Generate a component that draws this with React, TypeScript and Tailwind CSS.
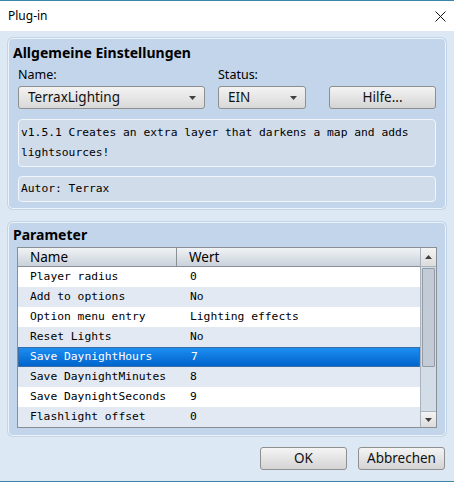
import React from "react";

const ui = { fontFamily: '"Noto Sans", "Liberation Sans", sans-serif' };
const mono = { fontFamily: '"DejaVu Sans Mono", "Liberation Mono", monospace' };

const params = [
  { name: "Player radius", value: "0" },
  { name: "Add to options", value: "No" },
  { name: "Option menu entry", value: "Lighting effects" },
  { name: "Reset Lights", value: "No" },
  { name: "Save DaynightHours", value: "7" },
  { name: "Save DaynightMinutes", value: "8" },
  { name: "Save DaynightSeconds", value: "9" },
  { name: "Flashlight offset", value: "0" },
];

const selected = 4;

function Arrow({ up = false }: { up?: boolean }) {
  return (
    <svg width="7" height="4" viewBox="0 0 7 4" className={up ? "rotate-180" : ""}>
      <path d="M0 0 H7 L3.5 4 Z" fill="#404040" />
    </svg>
  );
}

function Dropdown({ label, width }: { label: string; width: string }) {
  return (
    <div
      className={`${width} h-[23px] flex items-center justify-between pl-[9px] pr-[8px] rounded-[3px] border border-[#8f8f8f] bg-gradient-to-b from-[#f3f3f3] to-[#d9d9d9] text-[13.5px] text-[#111]`}
    >
      <span>{label}</span>
      <Arrow />
    </div>
  );
}

function Button({ label, width }: { label: string; width: string }) {
  return (
    <div
      className={`${width} h-[23px] flex items-center justify-center rounded-[3px] border border-[#8f8f8f] bg-gradient-to-b from-[#f4f4f4] to-[#d4d4d4] text-[13.5px] text-[#111]`}
    >
      {label}
    </div>
  );
}

export default function App() {
  return (
    <div className="w-[454px] h-[482px] flex flex-col border-t border-b border-[#3b87aa] bg-[#dde8f5]" style={ui}>
      {/* title bar */}
      <div className="h-[30px] shrink-0 bg-white flex items-center justify-between pl-[8px] pr-[8px]">
        <span className="text-[12px] text-black">Plug-in</span>
        <svg width="11" height="11" viewBox="0 0 11 11">
          <path d="M0.5 0.5 L10.5 10.5 M10.5 0.5 L0.5 10.5" stroke="#111" strokeWidth="1" />
        </svg>
      </div>

      {/* Allgemeine Einstellungen */}
      <div className="mx-[8px] mt-[7px] h-[171px] rounded-[5px] border border-[#edf3fa] bg-[#c3d5ea] px-[9px] pt-[6px] shadow-[0_0_0_1px_rgba(150,175,205,0.35)]">
        <div className="-ml-[5px] text-[14px] leading-[16px] font-bold text-black">Allgemeine Einstellungen</div>
        <div className="mt-[6px] flex text-[12.5px] leading-[16px] text-black">
          <span className="w-[200px]">Name:</span>
          <span>Status:</span>
        </div>
        <div className="mt-[3px] flex items-center">
          <Dropdown label="TerraxLighting" width="w-[187px]" />
          <div className="ml-[13px]">
            <Dropdown label="EIN" width="w-[88px]" />
          </div>
          <div className="ml-auto">
            <Button label="Hilfe..." width="w-[107px]" />
          </div>
        </div>
        <div
          className="mt-[10px] h-[48px] rounded-[4px] border border-[#f2f6fb] bg-[#d0dcea] pl-[2px] pt-[3px] text-[11.3px] leading-[20px] text-black"
          style={mono}
        >
          v1.5.1 Creates an extra layer that darkens a map and adds
          <br />
          lightsources!
        </div>
        <div
          className="mt-[9px] h-[26px] rounded-[4px] border border-[#f2f6fb] bg-[#d0dcea] pl-[2px] pt-[2px] text-[11.3px] leading-[20px] text-black"
          style={mono}
        >
          Autor: Terrax
        </div>
      </div>

      {/* Parameter */}
      <div className="mx-[8px] mt-[13px] h-[214px] rounded-[5px] border border-[#edf3fa] bg-[#c3d5ea] px-[8px] pt-[4px] shadow-[0_0_0_1px_rgba(150,175,205,0.35)]">
        <div className="ml-[-4px] text-[14px] leading-[16px] font-bold text-black">Parameter</div>
        <div className="mt-[4px] h-[181px] flex border border-[#8a8f96] bg-white">
          <div className="flex-1 flex flex-col">
            <div className="h-[19px] flex border-b border-[#8a8f96] bg-gradient-to-b from-[#f1f3f5] to-[#c9d1da] text-[13.5px] leading-[18px] text-black">
              <div className="w-[159px] pl-[12px] border-r border-[#8a8f96]">Name</div>
              <div className="pl-[12px]">Wert</div>
            </div>
            {params.map((p, i) => {
              const sel = i === selected;
              const bg = sel
                ? "bg-gradient-to-b from-[#1d8df2] to-[#0064cc] border border-[#3a6fa6] text-white"
                : i % 2 === 1
                  ? "bg-[#e3e9f2] text-black"
                  : "bg-white text-black";
              return (
                <div key={p.name} className={`h-[20px] flex items-center text-[11.3px] ${bg}`} style={mono}>
                  <div className={`w-[160px] ${sel ? "pl-[11px]" : "pl-[12px]"}`}>{p.name}</div>
                  <div className="pl-[12px]">{p.value}</div>
                </div>
              );
            })}
          </div>
          {/* scrollbar */}
          <div className="w-[16px] flex flex-col bg-[#d3dde8] border-l border-[#a9b3bf]">
            <div className="h-[19px] flex items-center justify-center border-b border-[#a9b3bf] bg-gradient-to-b from-[#f4f4f4] to-[#dcdcdc]">
              <Arrow up />
            </div>
            <div className="mx-[1px] mt-[1px] h-[99px] rounded-[1px] border border-[#939ba5] bg-[#c2cbd6]" />
            <div className="flex-1" />
            <div className="h-[16px] flex items-center justify-center border-t border-[#a9b3bf] bg-gradient-to-b from-[#f4f4f4] to-[#dcdcdc]">
              <Arrow />
            </div>
          </div>
        </div>
      </div>

      {/* buttons */}
      <div className="mt-[11px] flex justify-end gap-[11px] pr-[9px]">
        <Button label="OK" width="w-[87px]" />
        <Button label="Abbrechen" width="w-[87px]" />
      </div>
    </div>
  );
}
